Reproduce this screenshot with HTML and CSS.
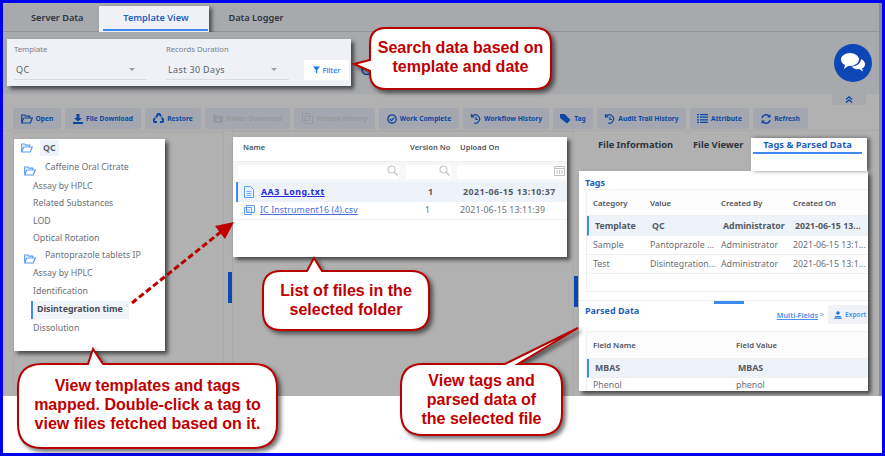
FILE: index.html
```html
<!DOCTYPE html>
<html lang="en">
<head>
  <meta charset="UTF-8" />
  <title>Template View</title>
  <link rel="stylesheet" href="styles.css">
</head>
<body>
  <div class="frame">
    <div class="app">
      <div class="tabs">
        <div class="tab">Server Data</div>
        <div class="tab tab-active"><span>Template View</span></div>
        <div class="tab">Data Logger</div>
      </div>

      <div class="filter-band">
        <div class="filter-card">
          <div class="field field-template">
            <label>Template</label>
            <div class="select">QC<i class="caret"></i></div>
          </div>
          <div class="field field-duration">
            <label>Records Duration</label>
            <div class="select">Last 30 Days<i class="caret"></i></div>
          </div>
          <button class="filter-btn">
            <svg width="7" height="8" viewBox="0 0 10 10"><path d="M0 0h10L6 5v5L4 8.500V5z" fill="#1976e8"/></svg>
            Filter
          </button>
        </div>
        <svg class="reset-icon" width="10" height="10" viewBox="0 0 10 10"><path d="M9 2A4.500 4.500 0 1 0 9 8" fill="none" stroke="#0d47a1" stroke-width="1.500"/></svg>
        <div class="chat">
          <svg width="26" height="24" viewBox="0 0 26 24">
            <path d="M10 2c5 0 9 3 9 6.500S15 15 10 15l-2 0-4 3 1-4C2.500 13 1 11 1 8.500 1 5 5 2 10 2z" fill="#fff"/>
            <path d="M21 8c2.500 1 4 3 4 5 0 2-1 3.500-3 4.500l1 3-4-2.500c-3 .5-6-.5-7.500-2.500 5 0 9.500-3 9.500-7.500z" fill="#fff"/>
          </svg>
        </div>
      </div>

      <div class="toolbar-band">
        <div class="collapse">
          <svg width="8" height="7" viewBox="0 0 9 8"><path d="M1 4l3.500-3L8 4M1 7.500l3.500-3 3.500 3" fill="none" stroke="#0d47a1" stroke-width="1.500"/></svg>
        </div>
        <div class="toolbar">
          <button class="tool w-open">
            <svg width="12" height="10" viewBox="0 0 12 10"><path d="M.7 9V1h3l1 1.200h4V4M.7 9l2-5h8.600l-2 5z" fill="none" stroke="#0d47a1" stroke-width="1.200"/></svg>Open</button>
          <button class="tool w-download">
            <svg width="10" height="10" viewBox="0 0 10 10"><path d="M3.500 0h3v4H9L5 7.500 1 4h2.500zM0 8h10v2H0z" fill="#0d47a1"/></svg>File Download</button>
          <button class="tool w-restore">
            <svg width="11" height="11" viewBox="0 0 11 11"><path d="M3 4.500l2-3.500h1.500l1.500 2.500M8.800 4.500l1.700 3-1 1.500H7M4 9H1.500L.5 7.300 2 5" fill="none" stroke="#0d47a1" stroke-width="2"/></svg>Restore</button>
          <button class="tool tool-off w-folder">
            <svg width="10" height="10" viewBox="0 0 10 10"><path d="M0 1h3.500l1 1H10v7H0z" fill="#96989e"/><path d="M5 3v4M3.500 5.500L5 7l1.500-1.500" stroke="#b0b0b4" fill="none"/></svg>Folder Download</button>
          <button class="tool tool-off w-version">
            <svg width="11" height="11" viewBox="0 0 11 11"><path d="M.5.500h7v7h-7zM3 3h7.500v7.500H3z" fill="none" stroke="#96989e"/></svg>Version History</button>
          <button class="tool w-complete">
            <svg width="10" height="10" viewBox="0 0 10 10"><circle cx="5" cy="5" r="4.200" fill="none" stroke="#0d47a1" stroke-width="1.300"/><path d="M2.800 5l1.600 1.600 2.800-2.800" fill="none" stroke="#0d47a1" stroke-width="1.300"/></svg>Work Complete</button>
          <button class="tool w-workflow">
            <svg width="11" height="10" viewBox="0 0 11 10"><path d="M2 2.500A4.200 4.200 0 1 1 4 9M1.500 0v3h3M6 3v2.500H8" fill="none" stroke="#0d47a1" stroke-width="1.200"/></svg>Workflow History</button>
          <button class="tool w-tag">
            <svg width="11" height="10" viewBox="0 0 11 10"><path d="M0 0h4.500L10.500 6 7 9.500 0 4z" fill="#0d47a1"/></svg>Tag</button>
          <button class="tool w-audit">
            <svg width="11" height="10" viewBox="0 0 11 10"><path d="M2 2.500A4.200 4.200 0 1 1 4 9M1.500 0v3h3M6 3v2.500H8" fill="none" stroke="#0d47a1" stroke-width="1.200"/></svg>Audit Trail History</button>
          <button class="tool w-attr">
            <svg width="11" height="9" viewBox="0 0 11 9"><path d="M0 .5h2M3 .5h8M0 3.200h2M3 3.200h8M0 5.900h2M3 5.900h8M0 8.500h2M3 8.500h8" stroke="#0d47a1" stroke-width="1.300"/></svg>Attribute</button>
          <button class="tool w-refresh">
            <svg width="10" height="10" viewBox="0 0 10 10"><path d="M1 4A4 4 0 0 1 8 2.200M9 6A4 4 0 0 1 2 7.800" fill="none" stroke="#0d47a1" stroke-width="1.500"/><path d="M9.500 0v3.500H6zM.5 10V6.500H4z" fill="#0d47a1"/></svg>Refresh</button>
        </div>
      </div>

      <div class="panels">
        <div class="pane pane-tree">
          <div class="tree-card">
            <div class="tree-root">
              <svg class="folder" width="12" height="10" viewBox="0 0 12 10"><path d="M.7 9V1h3l1 1.200h4V4M.7 9l2-5h8.600l-2 5z" fill="none" stroke="#5a9ef5" stroke-width="1.200"/></svg>
              <span class="chip">QC</span>
            </div>
            <div class="tree-group">
              <svg class="folder" width="12" height="10" viewBox="0 0 12 10"><path d="M.7 9V1h3l1 1.200h4V4M.7 9l2-5h8.600l-2 5z" fill="none" stroke="#5a9ef5" stroke-width="1.200"/></svg>
              <span>Caffeine Oral Citrate</span>
            </div>
            <div class="tree-item">Assay by HPLC</div>
            <div class="tree-item">Related Substances</div>
            <div class="tree-item">LOD</div>
            <div class="tree-item">Optical Rotation</div>
            <div class="tree-group">
              <svg class="folder" width="12" height="10" viewBox="0 0 12 10"><path d="M.7 9V1h3l1 1.200h4V4M.7 9l2-5h8.600l-2 5z" fill="none" stroke="#5a9ef5" stroke-width="1.200"/></svg>
              <span>Pantoprazole tablets IP</span>
            </div>
            <div class="tree-item">Assay by HPLC</div>
            <div class="tree-item">Identification</div>
            <div class="tree-item tree-selected">Disintegration time</div>
            <div class="tree-item">Dissolution</div>
          </div>
        </div>
        <div class="handle handle-a"></div>

        <div class="pane pane-files">
          <div class="files-card">
            <div class="files-row files-head">
              <div class="c-name">Name</div><div class="c-ver">Version No</div><div class="c-date">Upload On</div>
            </div>
            <div class="search-row">
              <div class="search s-name"><svg width="11" height="11" viewBox="0 0 11 11"><circle cx="4.500" cy="4.500" r="3.500" fill="none" stroke="#c9c9c9" stroke-width="1.200"/><path d="M7 7l3.500 3.500" stroke="#c9c9c9" stroke-width="1.500"/></svg></div>
              <div class="search s-ver"><svg width="11" height="11" viewBox="0 0 11 11"><circle cx="4.500" cy="4.500" r="3.500" fill="none" stroke="#c9c9c9" stroke-width="1.200"/><path d="M7 7l3.500 3.500" stroke="#c9c9c9" stroke-width="1.500"/></svg></div>
              <div class="search s-date"><svg width="11" height="11" viewBox="0 0 11 11"><path d="M.5 1.500h10v9H.5zM.5 3.500h10M3 5v4M5.500 5v4M8 5v4" fill="none" stroke="#c4c4c4"/></svg></div>
            </div>
            <div class="files-row file-selected">
              <div class="c-name">
                <svg width="10" height="12" viewBox="0 0 10 12"><path d="M.5.500h6l3 3v8H.5z" fill="#eef4fd" stroke="#5a9ef5"/><path d="M2.500 5.500h5M2.500 7.500h5M2.500 9.500h5" stroke="#5a9ef5" stroke-width=".8"/></svg>
                <a href="#">AA3_Long.txt</a>
              </div>
              <div class="c-ver">1</div><div class="c-date">2021-06-15 13:10:37</div>
            </div>
            <div class="files-row file-plain">
              <div class="c-name">
                <svg width="11" height="10" viewBox="0 0 11 10"><path d="M2.500.5h8v7h-8zM.5 2.500h7v7h-7z" fill="#fff" stroke="#5a9ef5"/><path d="M2 5h4M2 7h4" stroke="#5a9ef5" stroke-width=".8"/></svg>
                <a href="#">IC Instrument16 (4).csv</a>
              </div>
              <div class="c-ver">1</div><div class="c-date">2021-06-15 13:11:39</div>
            </div>
          </div>
        </div>
        <div class="handle handle-b"></div>

        <div class="pane pane-detail">
          <div class="detail-tabs">
            <div class="dtab dtab-info">File Information</div>
            <div class="dtab dtab-viewer">File Viewer</div>
            <div class="dtab dtab-active"><span>Tags &amp; Parsed Data</span></div>
          </div>
          <div class="detail-card">
            <h4 class="detail-title">Tags</h4>
            <div class="grid-box tags-box">
              <div class="t-row t-head"><div class="t-cat">Category</div><div class="t-val">Value</div><div class="t-by">Created By</div><div class="t-on">Created On</div></div>
              <div class="t-row t-selected"><div class="t-cat">Template</div><div class="t-val">QC</div><div class="t-by">Administrator</div><div class="t-on">2021-06-15 13...</div></div>
              <div class="t-row"><div class="t-cat">Sample</div><div class="t-val">Pantoprazole ...</div><div class="t-by">Administrator</div><div class="t-on">2021-06-15 13:1...</div></div>
              <div class="t-row"><div class="t-cat">Test</div><div class="t-val">Disintegration...</div><div class="t-by">Administrator</div><div class="t-on">2021-06-15 13:1...</div></div>
            </div>
            <div class="split"><i></i></div>
            <div class="parsed-head">
              <h4 class="detail-title">Parsed Data</h4>
              <a class="multi" href="#">Multi-Fields</a><span class="multi-arrow">&gt;</span>
              <button class="export">
                <svg width="8" height="8" viewBox="0 0 8 8"><circle cx="4" cy="2" r="1.800" fill="#1976e8"/><path d="M1.500 5h5l1 1.500H.5zM0 7.300h8V8H0z" fill="#1976e8"/></svg>
                Export</button>
            </div>
            <div class="grid-box parsed-box">
              <div class="p-row t-head"><div class="p-name">Field Name</div><div class="p-val">Field Value</div></div>
              <div class="p-row t-selected"><div class="p-name">MBAS</div><div class="p-val">MBAS</div></div>
              <div class="p-row p-last"><div class="p-name">Phenol</div><div class="p-val">phenol</div></div>
            </div>
          </div>
        </div>
      </div>
    </div>
    <div class="foot"></div>
  </div>

  <!-- annotations drawn on top of the screenshot -->
  <svg class="notes" width="885" height="456" viewBox="0 0 885 456">
    <g class="bubbles">
      <path d="M386 28H535Q551 28 551 44V73Q551 89 535 89H386Q370 89 370 73V71L354 64 370 60V44Q370 28 386 28Z"/>
      <path d="M281 271H307L314 258 322 271H411Q429 271 429 289V312Q429 330 411 330H281Q263 330 263 312V289Q263 271 281 271Z"/>
      <path d="M42 364H88L93 349 103 364H253Q277 364 277 388V424Q277 448 253 448H42Q18 448 18 424V388Q18 364 42 364Z"/>
      <path d="M423 364H505L578 328 518 364H540Q562 364 562 386V413Q562 435 540 435H423Q401 435 401 413V386Q401 364 423 364Z"/>
    </g>
    <path class="arrow-line" d="M132 303L222 231"/>
    <path class="arrow-head" d="M234 222L225 239 215 226Z"/>
  </svg>
  <div class="note note-search">Search data based on<br>template and date</div>
  <div class="note note-files">List of files in the<br>selected folder</div>
  <div class="note note-tree">View templates and tags<br>mapped. Double-click a tag to<br>view files fetched based on it.</div>
  <div class="note note-parsed">View tags and<br>parsed data of<br>the selected file</div>
</body>
</html>
```

FILE: styles.css
```css
* {
  box-sizing: border-box;
}
body {
  margin: 0;
  font-family: "Noto Sans", sans-serif;
  font-size: 8.800px;
  color: #6b6f76;
  background: #fff;
  overflow: hidden;
}
button {
  font-family: inherit;
  border: 0;
  padding: 0;
}
.frame {
  width: 885px;
  height: 456px;
  border: 3px solid #0000f0;
  display: flex;
  flex-direction: column;
}
.app {
  height: 393px;
  border-right: 3px solid #8b8c90;
  background: #b1b1b1;
  display: flex;
  flex-direction: column;
  overflow: hidden;
}
.foot {
  flex: 1;
  background: #fff;
}

/* top tabs */
.tabs {
  height: 29px;
  flex: none;
  display: flex;
  align-items: flex-start;
  background: #a8a9ad;
  border-bottom: 1px solid #939498;
  padding-left: 28px;
  font-weight: 600;
  font-size: 9.200px;
  color: #2c3340;
}
.tab {
  padding-top: 8px;
}
.tab-active {
  width: 110px;
  height: 33px;
  margin: 3px 19px 0 16px;
  padding: 5px 1px 0 4px;
  background: #eff1f6;
  color: #1f5fbf;
  text-align: center;
  box-shadow: 3px 2px 4px rgba(0, 0, 0, .55);
}
.tab-active span {
  display: block;
  height: 20px;
  border-bottom: 2px solid #3d8bf0;
}

/* filter band */
.filter-band {
  height: 62px;
  flex: none;
  display: flex;
  align-items: flex-start;
  background: #a8a9ad;
  padding: 7px 7px 0 4px;
}
.filter-card {
  width: 344px;
  height: 47px;
  background: #eff1f6;
  box-shadow: 3px 3px 4px rgba(0, 0, 0, .6);
  display: flex;
  padding: 5px 0 0 7px;
}
.field label {
  display: block;
  font-size: 7.700px;
  color: #7a8089;
  height: 14px;
}
.field-template {
  width: 133px;
  margin-right: 19px;
}
.field-duration {
  width: 123px;
  margin-right: 15px;
}
.select {
  height: 22px;
  padding: 5px 0 0 2px;
  border-bottom: 1px solid #d9dbe0;
  color: #5a5f68;
  font-size: 9px;
  position: relative;
  letter-spacing: .35px;
}
.caret {
  position: absolute;
  right: 12px;
  top: 10px;
  border: 3px solid transparent;
  border-top: 3px solid #9a9ea6;
}
.filter-btn {
  width: 45px;
  height: 20px;
  margin-top: 16px;
  background: #fff;
  border-radius: 2px;
  color: #4a90ee;
  font-size: 6.800px;
  font-weight: 700;
  display: flex;
  align-items: center;
  justify-content: center;
  gap: 3px;
}
.reset-icon {
  margin: 26px 0 0 10px;
}
.chat {
  width: 38px;
  height: 38px;
  margin: 5px 0 0 auto;
  border-radius: 50%;
  background: #0d47b5;
  display: flex;
  align-items: center;
  justify-content: center;
}

/* toolbar */
.toolbar-band {
  height: 37px;
  flex: none;
  display: flex;
  flex-direction: column;
  border-bottom: 1px solid #a9a9a9;
}
.collapse {
  width: 34px;
  height: 11px;
  margin: 0 13px 3px auto;
  background: #a8a9ad;
  display: flex;
  align-items: center;
  justify-content: center;
}
.toolbar {
  display: flex;
  gap: 4px;
  padding-left: 10px;
}
.tool {
  height: 21px;
  background: #a4a7af;
  border-radius: 2px;
  color: #0d47a1;
  font-size: 6.700px;
  font-weight: 700;
  display: flex;
  align-items: center;
  justify-content: center;
  gap: 3px;
}
.tool-off {
  color: #96989e;
}
.w-open { width: 48px; }
.w-download { width: 76px; }
.w-restore { width: 56px; }
.w-folder { width: 85px; }
.w-version { width: 81px; }
.w-complete { width: 80px; }
.w-workflow { width: 86px; }
.w-tag { width: 40px; }
.w-audit { width: 89px; }
.w-attr { width: 59px; }
.w-refresh { width: 55px; }

/* panes */
.panels {
  flex: 1;
  display: flex;
  padding-left: 10px;
  min-height: 0;
}
.pane {
  border: 1px solid #a9a9a9;
  border-width: 1px 1px 0 1px;
  flex: none;
}
.handle {
  width: 4px;
  height: 31px;
  margin-left: 4px;
  background: #0d47b5;
  flex: none;
}
.handle-a { margin-top: 141px; }
.handle-b { margin: 145px 0 0 0; }

.pane-tree {
  width: 211px;
  padding-top: 6px;
  margin-top: 1px;
}
.tree-card {
  width: 151px;
  height: 212px;
  background: #fff;
  box-shadow: 3px 3px 4px rgba(0, 0, 0, .6);
  padding: 1px 0 0 7px;
}
.tree-root {
  display: flex;
  align-items: center;
  height: 16px;
  gap: 7px;
  margin-bottom: 4px;
}
.chip {
  background: #eef2f9;
  padding: 0 3px;
  height: 16px;
  line-height: 16px;
  width: 19px;
  font-weight: 700;
  color: #5a6068;
}
.tree-group {
  height: 17.500px;
  display: flex;
  padding-left: 3px;
  gap: 9px;
}
.tree-group .folder {
  margin-top: 6px;
}
.tree-group span {
  margin-top: 1px;
}
.tree-item {
  height: 17.500px;
  line-height: 17.500px;
  padding-left: 12px;
}
.tree-selected {
  width: 98px;
  height: 18px;
  margin: 1px 0 0 10px;
  padding-left: 4px;
  font-weight: 700;
  background: #f0f3f9;
  border-left: 2px solid #3d8bf0;
  color: #4a4e55;
}
.tree-selected + .tree-item {
  margin-top: 1px;
}

.pane-files {
  width: 342px;
  padding-top: 5px;
}
.files-card {
  width: 334px;
  height: 120px;
  background: #fff;
  box-shadow: 3px 3px 4px rgba(0, 0, 0, .6);
}
.files-row {
  display: flex;
  align-items: center;
}
.files-head {
  height: 25px;
  font-size: 7.600px;
  font-weight: 600;
  color: #4f545c;
  padding-bottom: 5px;
  border-bottom: 1px solid #f0f0f0;
}
.c-name {
  width: 177px;
  padding-left: 10px;
  display: flex;
  align-items: center;
  gap: 5px;
}
.c-ver {
  width: 50px;
}
.search-row {
  height: 20px;
  display: flex;
  padding: 3px 0 0 5px;
  background: #f7f7f7;
}
.search {
  height: 14px;
  background: #fff;
  display: flex;
  justify-content: flex-end;
  padding-right: 1px;
}
.s-name { width: 161px; margin-right: 7px; }
.s-ver { width: 45px; margin-right: 6px; }
.s-date { width: 109px; }
.files-row a {
  color: #2a2ae0;
}
.file-selected {
  height: 20px;
  margin-left: 3px;
  padding-bottom: 1px;
  background: #eef2f9;
  border-left: 2px solid #3d8bf0;
  font-weight: 700;
  color: #555a62;
  letter-spacing: .5px;
}
.file-selected .c-name {
  width: 172px;
  padding-left: 6px;
  gap: 7px;
}
.file-selected .c-ver {
  padding-left: 18px;
  width: 53px;
}
.file-plain {
  height: 18px;
  padding-bottom: 1px;
  border-bottom: 1px solid #f0f0f0;
  letter-spacing: .1px;
}
.file-plain a {
  color: #4a6ee0;
}
.file-plain .c-name {
  padding-left: 11px;
}
.file-plain .c-ver {
  padding-left: 15px;
  width: 50px;
}

.pane-detail {
  width: 297px;
  border: 0;
}
.detail-tabs {
  height: 40px;
  display: flex;
  font-size: 9.300px;
  font-weight: 700;
  color: #2c3340;
  padding: 7px 0 0 20px;
}
.dtab-info { width: 95px; }
.dtab-viewer { width: 58px; }
.dtab-active {
  width: 116px;
  height: 33px;
  padding: 0 5px 0 2px;
  background: #fff;
  color: #1f5fbf;
  text-align: center;
  box-shadow: 3px 0 4px rgba(0, 0, 0, .5);
}
.dtab-active span {
  display: block;
  height: 16px;
  border-bottom: 2px solid #3d8bf0;
}
.detail-card {
  width: 289px;
  height: 220px;
  margin-left: 1px;
  background: #fff;
  box-shadow: 3px 3px 4px rgba(0, 0, 0, .6);
  padding: 6px 0 0 6px;
  overflow: hidden;
}
.detail-title {
  margin: 0;
  font-size: 9px;
  font-weight: 700;
  color: #1f5fbf;
  height: 12px;
  line-height: 12px;
}
.grid-box {
  width: 300px;
  margin: 0 0 0 1px;
  border: 1px solid #f0f0f0;
}
.tags-box {
  height: 103px;
}
.t-row, .p-row {
  display: flex;
  align-items: center;
  height: 19px;
  white-space: nowrap;
  padding-left: 6px;
  border-bottom: 1px solid #f0f0f0;
}
.t-head {
  height: 26px;
  font-size: 7.800px;
  font-weight: 600;
  color: #4f545c;
  background: #fcfcfc;
}
.t-selected {
  height: 20px;
  margin-left: 0;
  padding-left: 6px;
  background: #eef2f9;
  border-left: 2px solid #3d8bf0;
  font-weight: 700;
  color: #555a62;
}
.t-cat { width: 57px; }
.t-val { width: 71px; }
.t-by { width: 72px; }
.split {
  height: 9px;
  margin: 0 0 0 -6px;
  padding-left: 10px;
  border-bottom: 1px solid #f0f0f0;
  display: flex;
  justify-content: center;
}
.split i {
  width: 30px;
  height: 3px;
  margin: 9px 0 0 0;
  background: #3d8bf0;
}
.parsed-head {
  display: flex;
  height: 30px;
  padding-top: 4px;
}
.parsed-head .detail-title {
  width: 192px;
}
.multi {
  color: #4a90ee;
  font-size: 7.300px;
  font-weight: 600;
  margin-top: 5px;
  white-space: nowrap;
}
.multi-arrow {
  color: #4a90ee;
  font-size: 7px;
  margin: 5px 4px 0 2px;
}
.export {
  width: 40px;
  height: 19px;
  background: #f0f2f7;
  color: #4a90ee;
  font-size: 6.600px;
  font-weight: 600;
  display: flex;
  align-items: center;
  gap: 3px;
  padding-left: 6px;
  border-radius: 2px;
}
.p-name { width: 143px; }
.parsed-box .t-head {
  height: 27px;
}
.parsed-box .t-selected {
  height: 19px;
}
.p-last {
  align-items: flex-start;
  padding-top: 3px;
  line-height: 8px;
}

/* annotations */
.notes {
  position: absolute;
  left: 0;
  top: 0;
}
.bubbles path {
  fill: #fff;
  stroke: #b80000;
  stroke-width: 2px;
  filter: drop-shadow(3px 3px 2px rgba(0, 0, 0, .55));
}
.arrow-line {
  fill: none;
  stroke: #b80000;
  stroke-width: 3px;
  stroke-dasharray: 6 3;
}
.arrow-head {
  fill: #c00000;
}
.note {
  position: absolute;
  font-family: "Liberation Sans", Arial, sans-serif;
  font-size: 16px;
  font-weight: 700;
  line-height: 19px;
  color: #c00000;
  text-align: center;
  white-space: nowrap;
}
.note-search { left: 370px; top: 38px; width: 181px; }
.note-files { left: 263px; top: 281px; width: 166px; }
.note-tree { left: 18px; top: 376px; width: 259px; }
.note-parsed { left: 401px; top: 371px; width: 161px; }
```
